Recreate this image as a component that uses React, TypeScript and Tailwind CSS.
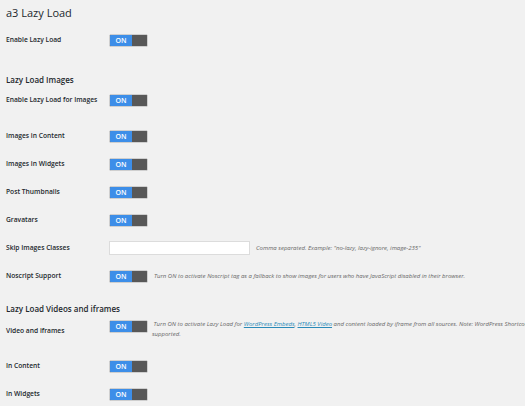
import React from 'react';

const Toggle = () => (
  <div className="flex h-[13px] w-[39px] shrink-0 overflow-hidden rounded-[2px] border border-[#cfcfcf] bg-[#565656]">
    <div className="flex w-[22px] items-center justify-center bg-[#3d8ee8] text-[7px] font-semibold leading-none text-white">
      ON
    </div>
    <div className="flex-1 bg-[#585858]" />
  </div>
);

function Row({ label, children, className = '' }: { label: string; children: React.ReactNode; className?: string }) {
  return (
    <div className={`flex h-[28px] items-center ${className}`}>
      <div className="w-[103px] shrink-0 text-[6.7px] font-semibold text-[#23282d]">{label}</div>
      {children}
    </div>
  );
}

const Desc = ({ children }: { children: React.ReactNode }) => (
  <span className="ml-[6px] whitespace-nowrap text-[6px] italic text-[#666]">{children}</span>
);

export default function App() {
  return (
    <div
      className="h-[406px] w-[525px] overflow-hidden bg-[#f1f1f1] pl-[6px]"
      style={{ fontFamily: '"Open Sans", "Noto Sans", sans-serif' }}
    >
      {/* Title */}
      <div className="flex h-[26px] items-center text-[11px] text-[#23282d]">a3 Lazy Load</div>

      <Row label="Enable Lazy Load">
        <Toggle />
      </Row>

      {/* Images section */}
      <div className="mt-[15px] flex h-[22px] items-center text-[8px] font-semibold text-[#23282d]">Lazy Load Images</div>
      <Row label="Enable Lazy Load for Images" className="mt-[-5px]">
        <Toggle />
      </Row>
      <Row label="Images in Content" className="mt-[8px]">
        <Toggle />
      </Row>
      <Row label="Images in Widgets">
        <Toggle />
      </Row>
      <Row label="Post Thumbnails">
        <Toggle />
      </Row>
      <Row label="Gravatars">
        <Toggle />
      </Row>
      <Row label="Skip Images Classes">
        <div className="h-[14px] w-[141px] shrink-0 border border-[#dcdcdc] bg-white" />
        <Desc>Comma separated. Example: "no-lazy, lazy-ignore, image-235"</Desc>
      </Row>
      <Row label="Noscript Support">
        <Toggle />
        <Desc>Turn ON to activate Noscript tag as a fallback to show images for users who have JavaScript disabled in their browser.</Desc>
      </Row>

      {/* Videos section */}
      <div className="mt-[8px] flex h-[22px] items-center text-[8px] font-semibold text-[#23282d]">
        Lazy Load Videos and iframes
      </div>
      <div className="flex items-start">
        <div className="mt-[6px] w-[103px] shrink-0 text-[6.7px] font-semibold text-[#23282d]">Video and iframes</div>
        <Toggle />
        <div className="ml-[4px] w-[430px] shrink-0 text-[6px] leading-[9.5px] italic text-[#666]">
          &nbsp;Turn ON to activate Lazy Load for{' '}
          <a className="text-[#2a8ab8] underline">WordPress Embeds</a>,{' '}
          <a className="text-[#2a8ab8] underline">HTML5 Video</a> and content loaded by iframe from all sources. Note:
          WordPress Shortcodes are not supported.
        </div>
      </div>
      <Row label="In Content" className="mt-[13px]">
        <Toggle />
      </Row>
      <Row label="In Widgets">
        <Toggle />
      </Row>
    </div>
  );
}
